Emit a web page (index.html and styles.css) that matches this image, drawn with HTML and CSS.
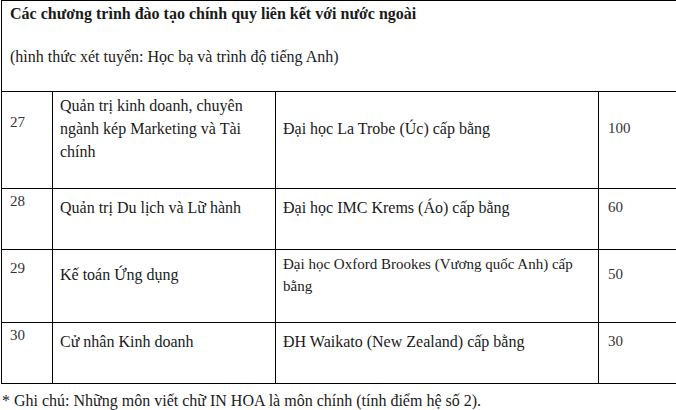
FILE: index.html
```html
<!DOCTYPE html>
<html lang="vi">
<head>
<meta charset="utf-8">
<title>Chương trình liên kết</title>
<link rel="stylesheet" href="styles.css">
</head>
<body>
<div class="page">
  <table class="programs">
    <colgroup>
      <col class="c-num">
      <col class="c-name">
      <col class="c-uni">
      <col class="c-quota">
    </colgroup>
    <tbody>
      <tr class="r-head">
        <td colspan="4" class="head">
          <p class="title"><strong>Các chương trình đào tạo chính quy liên kết với nước ngoài</strong></p>
          <p class="sub">(hình thức xét tuyển: Học bạ và trình độ tiếng Anh)</p>
        </td>
      </tr>
      <tr class="r-27">
        <td class="num"><p>27</p></td>
        <td><p>Quản trị kinh doanh, chuyên ngành kép Marketing và Tài chính</p></td>
        <td><p>Đại học La Trobe (Úc) cấp bằng</p></td>
        <td class="quota"><p>100</p></td>
      </tr>
      <tr class="r-28">
        <td class="num"><p>28</p></td>
        <td><p>Quản trị Du lịch và Lữ hành</p></td>
        <td><p>Đại học IMC Krems (Áo) cấp bằng</p></td>
        <td class="quota"><p>60</p></td>
      </tr>
      <tr class="r-29">
        <td class="num"><p>29</p></td>
        <td><p>Kế toán Ứng dụng</p></td>
        <td class="small"><p>Đại học Oxford Brookes (Vương quốc Anh) cấp bằng</p></td>
        <td class="quota"><p>50</p></td>
      </tr>
      <tr class="r-30">
        <td class="num"><p>30</p></td>
        <td><p>Cử nhân Kinh doanh</p></td>
        <td><p>ĐH Waikato (New Zealand) cấp bằng</p></td>
        <td class="quota"><p>30</p></td>
      </tr>
    </tbody>
  </table>
  <p class="note">* Ghi chú: Những môn viết chữ IN HOA là môn chính (tính điểm hệ số 2).</p>
</div>
</body>
</html>
```

FILE: styles.css
```css
html, body {
  margin: 0;
  padding: 0;
  background: #ffffff;
}

body {
  font-family: "Liberation Serif", "Times New Roman", serif;
  font-size: 16px;
  line-height: 23px;
  color: #1a1a1a;
  overflow: hidden;
  width: 676px;
  height: 410px;
}

.page {
  padding-left: 1px;
}

.programs {
  border-collapse: collapse;
  table-layout: fixed;
  width: 675px;
}

.c-num { width: 51px; }
.c-name { width: 223px; }
.c-uni { width: 323px; }
.c-quota { width: 78px; }

.programs td {
  border: 1px solid #000;
  padding: 0 8px 0 7px;
  vertical-align: middle;
}

.programs td.quota,
.programs td.head {
  border-right: 0;
}

.programs td p {
  margin: 0 0 24px;
}

.programs td.head {
  vertical-align: top;
  padding: 1px 8px 0 8px;
}

.programs td.head p {
  margin: 0 0 20px;
}

.title strong {
  font-weight: bold;
}

.r-head { height: 91px; }
.r-27 { height: 97px; }
.r-28 { height: 61px; }
.r-29 { height: 73px; }
.r-30 { height: 61px; }

.programs td.num {
  padding-left: 8px;
  font-size: 15px;
  color: #333;
}

.programs td.num p {
  margin-bottom: 36px;
}

.programs td.quota {
  padding-left: 9px;
  font-size: 15px;
  color: #333;
}

.programs td.small {
  font-size: 15px;
  line-height: 22px;
}

.programs td.small p {
  margin-bottom: 22px;
}

.note {
  margin: 5px 0 0 1px;
}
```
